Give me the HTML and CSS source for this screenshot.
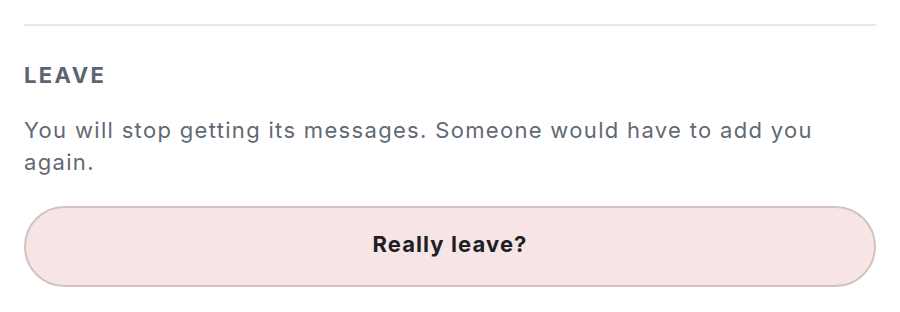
FILE: index.html
```html
<!DOCTYPE html>
<html lang="en">
<head>
<meta charset="utf-8">
<link rel="stylesheet" href="styles.css">
</head>
<body>
<section class="panel">
  <hr class="divider">
  <h2 class="heading">LEAVE</h2>
  <p class="desc">You will stop getting its messages. Someone would have to add you again.</p>
  <button class="leave-btn" type="button">Really leave?</button>
</section>
</body>
</html>
```

FILE: styles.css
```css
html, body {
  margin: 0;
  padding: 0;
  background: #ffffff;
}
body {
  font-family: Inter, "Noto Sans", "Liberation Sans", sans-serif;
}
.panel {
  padding: 24px 24px 0;
  display: flex;
  flex-direction: column;
}
.divider {
  margin: 0;
  border: 0;
  height: 2px;
  background: #e6e7e8;
}
.heading {
  margin: 36px 0 0;
  font-size: 22px;
  line-height: 26px;
  font-weight: 700;
  letter-spacing: 2.4px;
  color: #5b6570;
}
.desc {
  margin: 26px 0 0;
  font-size: 22px;
  line-height: 32px;
  letter-spacing: 0.06em;
  color: #5f6a75;
}
.leave-btn {
  margin-top: 28px;
  height: 81px;
  box-sizing: border-box;
  width: 100%;
  border: 2px solid #d4c2c1;
  border-radius: 999px;
  background: #f7e5e5;
  font-family: inherit;
  font-size: 22px;
  line-height: 26px;
  font-weight: 700;
  letter-spacing: 0.05em;
  color: #1d2025;
  padding: 0 0 5px;
  display: flex;
  align-items: center;
  justify-content: center;
}
```
